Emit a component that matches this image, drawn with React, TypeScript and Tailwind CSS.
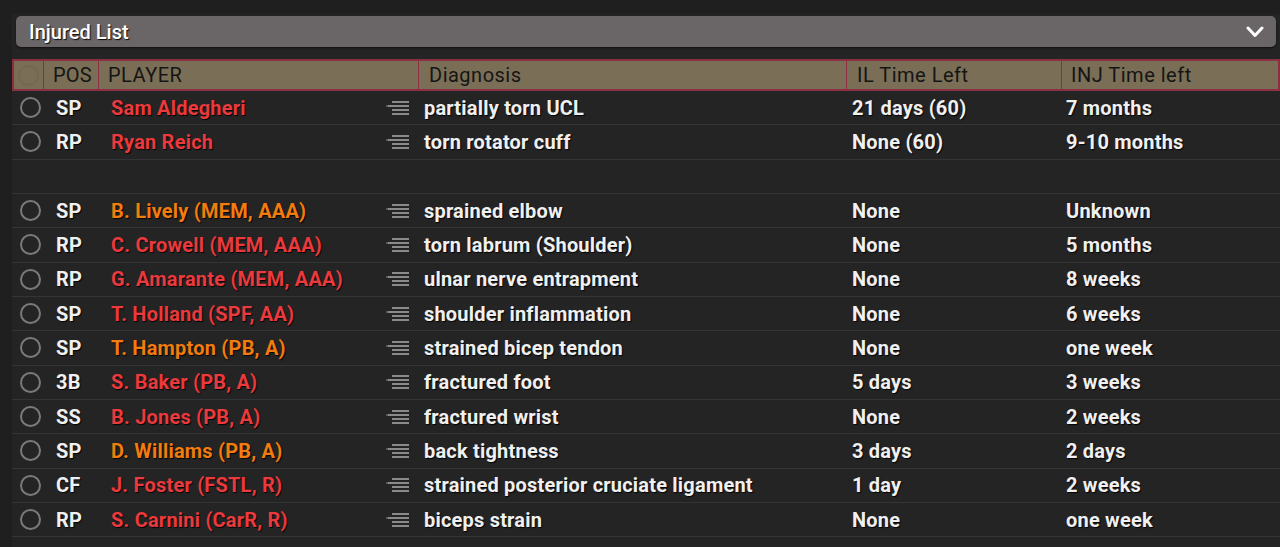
import React from "react";

type Row = { pos: string; name: string; color: "red" | "orange"; diag: string; il: string; inj: string } | null;

const rows: Row[] = [
  { pos: "SP", name: "Sam Aldegheri", color: "red", diag: "partially torn UCL", il: "21 days (60)", inj: "7 months" },
  { pos: "RP", name: "Ryan Reich", color: "red", diag: "torn rotator cuff", il: "None (60)", inj: "9-10 months" },
  null,
  { pos: "SP", name: "B. Lively (MEM, AAA)", color: "orange", diag: "sprained elbow", il: "None", inj: "Unknown" },
  { pos: "RP", name: "C. Crowell (MEM, AAA)", color: "red", diag: "torn labrum (Shoulder)", il: "None", inj: "5 months" },
  { pos: "RP", name: "G. Amarante (MEM, AAA)", color: "red", diag: "ulnar nerve entrapment", il: "None", inj: "8 weeks" },
  { pos: "SP", name: "T. Holland (SPF, AA)", color: "red", diag: "shoulder inflammation", il: "None", inj: "6 weeks" },
  { pos: "SP", name: "T. Hampton (PB, A)", color: "orange", diag: "strained bicep tendon", il: "None", inj: "one week" },
  { pos: "3B", name: "S. Baker (PB, A)", color: "red", diag: "fractured foot", il: "5 days", inj: "3 weeks" },
  { pos: "SS", name: "B. Jones (PB, A)", color: "red", diag: "fractured wrist", il: "None", inj: "2 weeks" },
  { pos: "SP", name: "D. Williams (PB, A)", color: "orange", diag: "back tightness", il: "3 days", inj: "2 days" },
  { pos: "CF", name: "J. Foster (FSTL, R)", color: "red", diag: "strained posterior cruciate ligament", il: "1 day", inj: "2 weeks" },
  { pos: "RP", name: "S. Carnini (CarR, R)", color: "red", diag: "biceps strain", il: "None", inj: "one week" },
];

function ListIcon() {
  return (
    <svg width="24" height="16" viewBox="0 0 24 16" className="shrink-0">
      <g stroke="#8a8a8a" strokeWidth="2">
        <line x1="7" y1="2" x2="24" y2="2" />
        <line x1="3" y1="6" x2="24" y2="6" />
        <line x1="7" y1="10" x2="24" y2="10" />
        <line x1="7" y1="14" x2="24" y2="14" />
      </g>
      <line x1="1" y1="6" x2="3" y2="6" stroke="#6a6a6a" strokeWidth="1.5" />
    </svg>
  );
}

function Radio({ dim }: { dim?: boolean }) {
  return (
    <div
      className={
        dim
          ? "w-[21px] h-[21px] rounded-full border-2 border-[#716954]"
          : "w-[21px] h-[21px] rounded-full border-2 border-[#7a7a7a]"
      }
    />
  );
}

const shadow = "[text-shadow:1px_1px_1px_rgba(0,0,0,0.9)]";

export default function App() {
  return (
    <div
      className="w-[1280px] h-[547px] overflow-hidden bg-[#1f1f1f] pl-[12px] pt-[14px]"
      style={{ fontFamily: "Roboto, 'Noto Sans', sans-serif" }}
    >
      <div className="h-full bg-[#242424] flex flex-col">
        <div className="pl-[4px] pr-[4px] pt-[2px]">
          <div className="h-[31px] rounded-[5px] bg-[#6a6667] shadow-[0_1px_2px_rgba(0,0,0,0.6)] flex items-center justify-between pl-[13px] pr-[12px]">
            <span className={`text-white text-[20px] font-medium ${shadow}`}>Injured List</span>
            <svg width="18" height="12" viewBox="0 0 18 12">
              <polyline points="2,2 9,9.5 16,2" fill="none" stroke="#ffffff" strokeWidth="3" strokeLinecap="round" strokeLinejoin="round" />
            </svg>
          </div>
        </div>
        <div className="mt-[12px] flex h-[32px] bg-[#7a6f56] border-2 border-[#8c2f42] text-[#151515] text-[20px] tracking-[0.5px]">
          <div className="w-[30px] flex items-center justify-center border-r border-[#8c2f42]">
            <Radio dim />
          </div>
          <div className="w-[55px] flex items-center pl-[9px] border-r border-[#8c2f42] tracking-[0.2px]">POS</div>
          <div className="w-[320px] flex items-center pl-[9px] border-r border-[#8c2f42]">PLAYER</div>
          <div className="w-[428px] flex items-center pl-[10px] border-r border-[#8c2f42]">Diagnosis</div>
          <div className="w-[215px] flex items-center pl-[10px] border-r border-[#8c2f42]">IL Time Left</div>
          <div className="flex-1 flex items-center pl-[9px]">INJ Time left</div>
        </div>
        <div className="flex flex-col">
          {rows.map((r, i) => (
            <div key={i} className="h-[34.33px] flex items-center border-b border-[#343434] text-[20px] font-bold tracking-[0.2px] text-[#f0f0f0]">
              {r && (
                <>
                  <div className="w-[32px] flex items-center justify-center pl-[4px]">
                    <Radio />
                  </div>
                  <div className={`w-[55px] pl-[12px] ${shadow}`}>{r.pos}</div>
                  <div className="w-[320px] pl-[12px] pr-[10px] flex items-center justify-between">
                    <span className={`${r.color === "red" ? "text-[#ea3a3d]" : "text-[#f27c0f]"} ${shadow}`}>{r.name}</span>
                    <ListIcon />
                  </div>
                  <div className={`w-[428px] pl-[5px] ${shadow}`}>{r.diag}</div>
                  <div className={`w-[215px] pl-[5px] ${shadow}`}>{r.il}</div>
                  <div className={`flex-1 pl-[4px] ${shadow}`}>{r.inj}</div>
                </>
              )}
            </div>
          ))}
        </div>
      </div>
    </div>
  );
}
